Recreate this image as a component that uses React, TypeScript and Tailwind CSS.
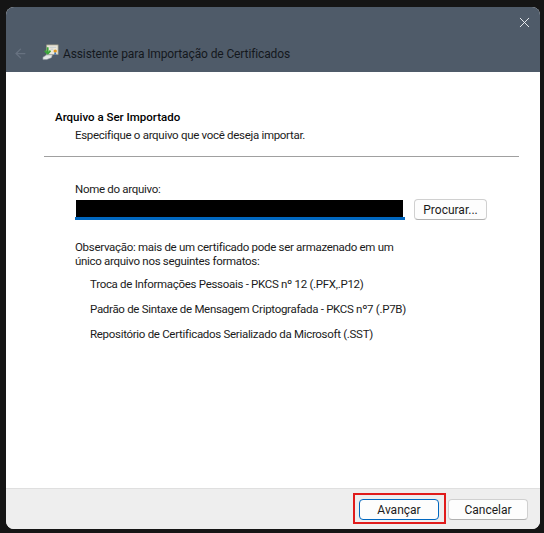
import { X, ArrowLeft } from 'lucide-react'

const font = { fontFamily: 'Roboto, "Open Sans", sans-serif' }

function CertIcon() {
  return (
    <svg width="17" height="17" viewBox="0 0 18 18" className="shrink-0">
      <rect x="5" y="1" width="12" height="10" fill="#ece8da" stroke="#a9a48e" strokeWidth="0.8" />
      <path d="M8 3.5h7M9 5.5h3" stroke="#b8c4cc" strokeWidth="0.8" />
      <circle cx="14" cy="7.5" r="1.8" fill="#e39a1e" />
      <path d="M13.2 9l-.4 2.6 1.2-.6 1.2.6-.4-2.6" fill="#3f74b8" />
      <path d="M6 3.5v6" stroke="#3aa53a" strokeWidth="2" />
      <path d="M3 7L6 10.5 9 7" fill="none" stroke="#3aa53a" strokeWidth="1.8" />
      <path d="M1 14l4-2.5h6l-1 3-5 2H1z" fill="#e4e6e6" stroke="#8f979b" strokeWidth="0.6" />
    </svg>
  )
}

export default function App() {
  return (
    <div className="w-[544px] h-[533px] bg-[#151515] pt-[7px] pl-[6px] pr-[4px] pb-[4px] overflow-hidden" style={font}>
      <div className="h-full flex flex-col rounded-lg overflow-hidden bg-white text-[11.5px] tracking-[-0.3px] text-[#1b1b1b]">
        {/* Header */}
        <div className="h-[65px] shrink-0 bg-[#4f5b69] relative flex items-end pb-[10px] pl-[7px]">
          <ArrowLeft className="w-[15px] h-[15px] text-[#677280] mb-[1px]" strokeWidth={2} />
          <div className="ml-[14px] mr-[4px] mb-[1px]">
            <CertIcon />
          </div>
          <span className="text-[#14181d] text-[12px] tracking-[-0.12px] leading-[16px]">Assistente para Importação de Certificados</span>
          <button className="absolute top-[7px] right-[7px] text-[#f2f4f6]">
            <X className="w-[17px] h-[17px]" strokeWidth={1.3} />
          </button>
        </div>

        {/* Content */}
        <div className="flex-1 flex flex-col">
          <div className="pt-[37px] pl-[49px]">
            <h2 className="font-medium text-[11.5px] tracking-normal leading-[16px] text-black">Arquivo a Ser Importado</h2>
            <p className="pl-[20px] mt-[2px] leading-[16px]">Especifique o arquivo que você deseja importar.</p>
          </div>
          <div className="h-px bg-[#a0a0a0] ml-[38px] mr-[21px] mt-[13px]" />

          <div className="pl-[69px] pr-[53px] pt-[24px]">
            <label className="block leading-[16px]">Nome do arquivo:</label>
            <div className="flex gap-[9px] mt-[2px] items-start">
              <div className="w-[330px] pt-[1px] border-b-[3px] border-[#0067c0]">
                <div className="h-[17px] bg-black ml-[1px] mr-[2px]" />
              </div>
              <button className="w-[73px] h-[21px] rounded-[4px] bg-[#fdfdfd] border border-[#d0d0d0] border-b-[#b0b0b0] text-[12px] tracking-[0px] leading-[16px]">
                Procurar...
              </button>
            </div>
            <p className="mt-[20px] w-[325px] leading-[14px]">
              Observação: mais de um certificado pode ser armazenado em um único arquivo nos seguintes formatos:
            </p>
            <ul className="pl-[15px] mt-[8px] flex flex-col gap-[9px] leading-[16px]">
              <li>Troca de Informações Pessoais - PKCS nº 12 (.PFX,.P12)</li>
              <li>Padrão de Sintaxe de Mensagem Criptografada - PKCS nº7 (.P7B)</li>
              <li>Repositório de Certificados Serializado da Microsoft (.SST)</li>
            </ul>
          </div>
        </div>

        {/* Footer */}
        <div className="h-[41px] shrink-0 bg-[#eeeeee] border-t border-[#dfdfdf] flex items-center justify-end gap-[9px] pr-[12px] pt-[1px]">
          <div className="relative">
            <button className="block w-[80px] h-[21px] rounded-[4px] bg-[#fdfdfd] border border-[#0067c0] text-[12px] tracking-[0px] leading-[16px]">
              Avançar
            </button>
            <div className="absolute -left-[6px] -right-[7px] -top-[6px] -bottom-[4px] border-[2px] border-[#e01b1b]" />
          </div>
          <button className="block w-[80px] h-[21px] rounded-[4px] bg-[#fdfdfd] border border-[#d0d0d0] border-b-[#b0b0b0] text-[12px] tracking-[0px] leading-[16px]">
            Cancelar
          </button>
        </div>
      </div>
    </div>
  )
}
